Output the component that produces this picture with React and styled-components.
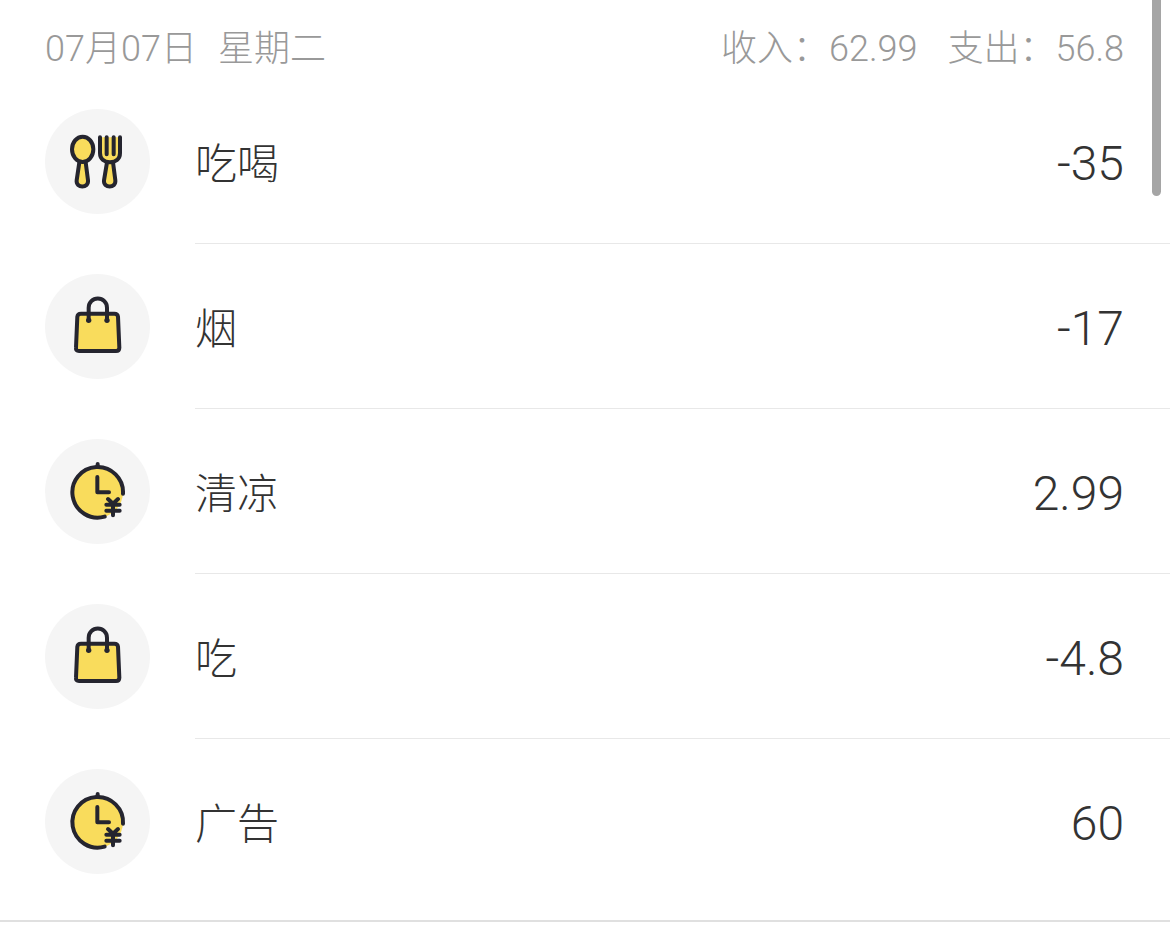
import styled, { createGlobalStyle } from 'styled-components'


const GlobalStyle = createGlobalStyle`
  body {
    margin: 0;
    background: #ffffff;
    font-family: Roboto, "Noto Sans CJK SC", sans-serif;
    font-weight: 300;
  }
`

const SpoonFork = () => (
  <Icon viewBox="0 0 315 315" aria-hidden="true">
    <path d="M103 160 L95 214 C92 239 132 239 129 214 L122 160" />
    <ellipse cx="113" cy="121" rx="32" ry="38" />
    <path d="M186 160 L177 214 C174 239 214 239 211 214 L204 160" />
    <path d="M165 85 V132 C165 151 179 160 195 160 C211 160 225 151 225 132 V85" />
    <path d="M185 85 V136 M206 85 V136" />
  </Icon>
)

const Bag = () => (
  <Icon viewBox="0 0 315 315" aria-hidden="true">
    <path d="M108 119 H208 Q218 119 219 128 L223 221 Q223 231 213 231 H102 Q92 231 93 221 L97 128 Q98 119 108 119 Z" />
    <path d="M131 139 V101 A27 27 0 0 1 186 101 V139" fill="none" />
    <Dot cx="131" cy="139" r="8" />
    <Dot cx="186" cy="139" r="8" />
  </Icon>
)

const ClockYen = () => (
  <Icon viewBox="0 0 315 315" aria-hidden="true">
    <circle cx="158" cy="160" r="76" stroke="none" />
    <path d="M179 233 A76 76 0 1 1 234 164" fill="none" />
    <path d="M158 75 V82" />
    <path d="M157 114 V160 H192" fill="none" />
    <path d="M189 180 L204 194 L219 180 M184 197 H224 M184 215 H224 M204 196 V229" fill="none" />
  </Icon>
)

const records = [
  { id: 1, name: '吃喝', amount: '-35', icon: SpoonFork },
  { id: 2, name: '烟', amount: '-17', icon: Bag },
  { id: 3, name: '清凉', amount: '2.99', icon: ClockYen },
  { id: 4, name: '吃', amount: '-4.8', icon: Bag },
  { id: 5, name: '广告', amount: '60', icon: ClockYen },
]

export default function App() {
  return (
    <Page>
      <GlobalStyle />
      <DayHeader>
        <DayText>
          <span>07月07日</span>
          <span>星期二</span>
        </DayText>
        <Totals>
          <span>收入：62.99</span>
          <span>支出：56.8</span>
        </Totals>
      </DayHeader>
      <RecordList>
        {records.map(({ id, name, amount, icon: RecordIcon }) => (
          <Record key={id}>
            <IconCircle><RecordIcon /></IconCircle>
            <RecordBody>
              <Name>{name}</Name>
              <Amount>{amount}</Amount>
            </RecordBody>
          </Record>
        ))}
      </RecordList>
      <ScrollThumb />
    </Page>
  )
}

const Page = styled.main`
  position: relative;
`

const DayHeader = styled.header`
  display: flex;
  justify-content: space-between;
  align-items: center;
  padding: 22px 46px 3px 45px;
  color: #999999;
  font-size: 36px;
  line-height: 54px;
`

const DayText = styled.div`
  display: flex;
  gap: 21px;
`

const Totals = styled.div`
  display: flex;
  gap: 30px;
`

const RecordList = styled.ul`
  margin: 0;
  padding: 0 0 16px;
  list-style: none;
  border-bottom: 2px solid #e0e0e0;
`

const Record = styled.li`
  display: flex;
  align-items: stretch;
  padding-left: 45px;
`

const IconCircle = styled.div`
  width: 105px;
  height: 105px;
  margin: 30px 45px 30px 0;
  border-radius: 50%;
  background: #f5f5f5;
`

const Icon = styled.svg`
  display: block;
  width: 100%;
  height: 100%;
  fill: #f9dc5c;
  stroke: #25252f;
  stroke-width: 12;
  stroke-linecap: round;
  stroke-linejoin: round;

  [fill='none'] {
    fill: none;
  }
  [stroke='none'] {
    stroke: none;
  }
`

const Dot = styled.circle`
  fill: #25252f;
  stroke: none;
`

const RecordBody = styled.div`
  flex: 1;
  display: flex;
  justify-content: space-between;
  align-items: center;
  padding: 5px 46px 0 0;
  border-bottom: 1px solid #e8e8e8;
  color: #333333;

  ${Record}:last-child & {
    border-bottom-color: transparent;
  }
`

const Name = styled.span`
  padding-top: 3px;
  font-size: 42px;
  line-height: 60px;
`

const Amount = styled.span`
  font-size: 48px;
  line-height: 60px;
`

const ScrollThumb = styled.div`
  position: absolute;
  top: 0;
  right: 9px;
  width: 9px;
  height: 196px;
  border-radius: 0 0 5px 5px;
  background: #a5a5a5;
`
